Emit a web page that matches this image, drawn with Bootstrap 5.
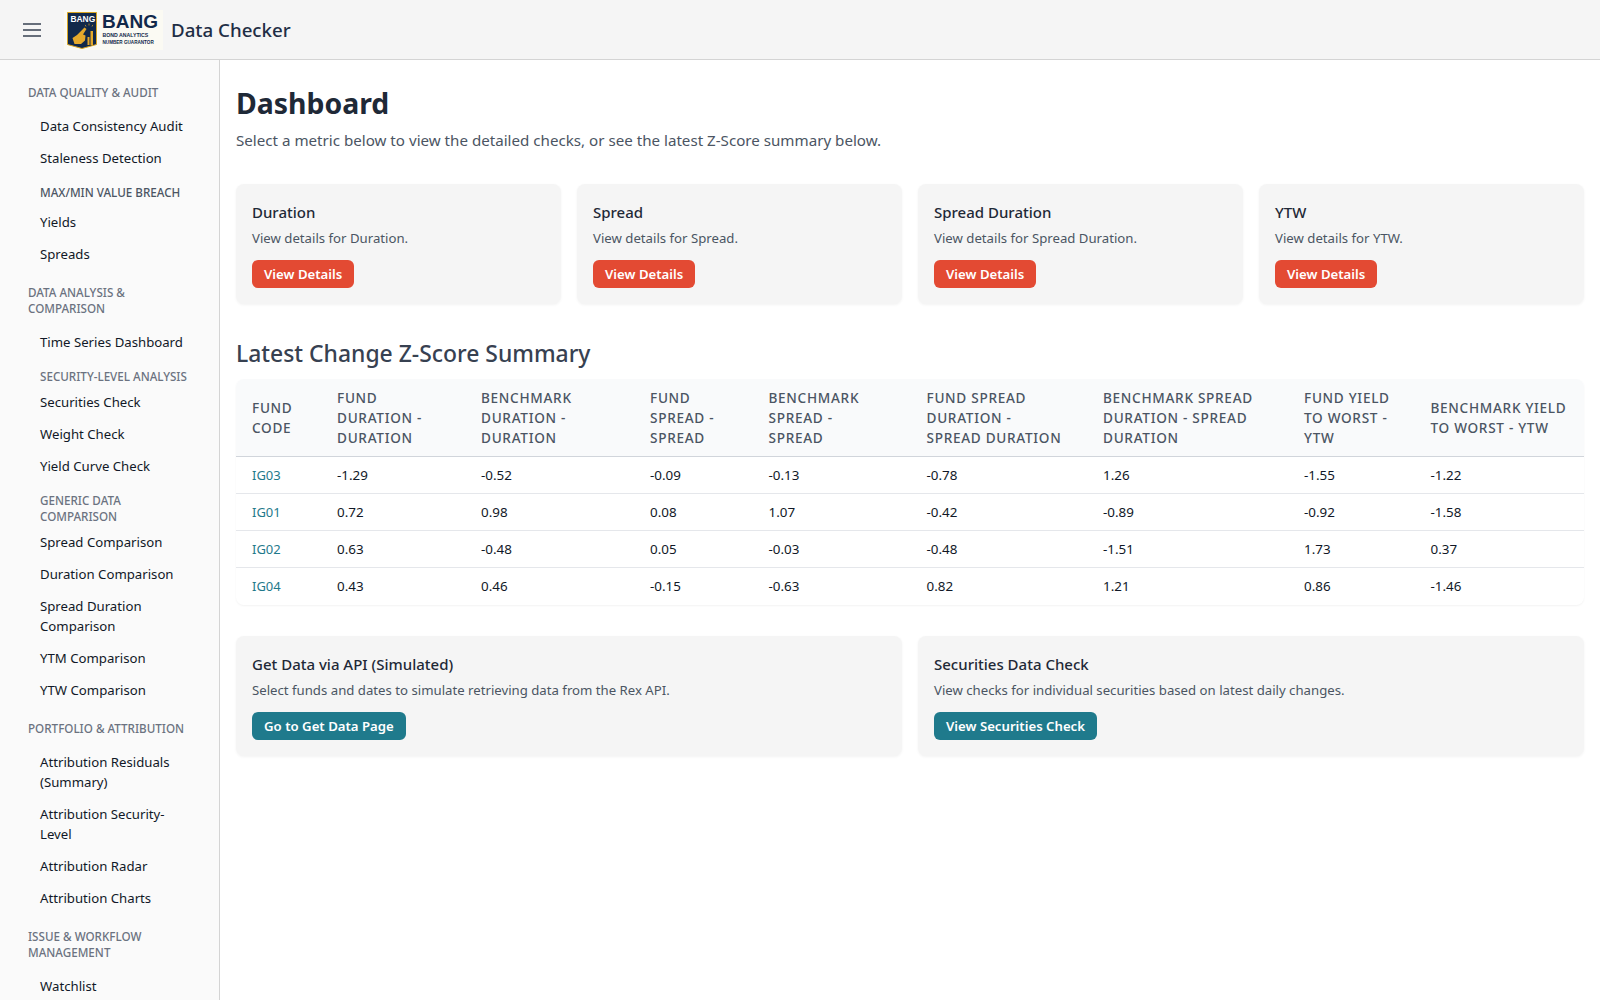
<!DOCTYPE html>
<html lang="en">
<head>
  <meta charset="UTF-8" />
  <title>Data Checker</title>
  <link href="https://cdn.jsdelivr.net/npm/bootstrap@5.3.3/dist/css/bootstrap.min.css" rel="stylesheet">
  <style>
    body {
      font-family: "Noto Sans", "Open Sans", sans-serif;
      font-size: 13.2px;
      color: #1f2937;
      background: #fff;
      height: 1000px;
      overflow: hidden;
    }
    .topbar {
      height: 60px;
      background: #f5f5f5;
      border-bottom: 1px solid #d4d4d4;
      padding-left: 23px;
    }
    .burger { width: 18px; margin-right: 23px; }
    .logo-box { width: 99px; height: 40px; background: #fbfaf3; margin-right: 8px; }
    .app-title { font-size: 18.7px; font-weight: 500; color: #1f2e45; margin-top: 2px; }
    .side {
      width: 220px;
      flex: none;
      height: 940px;
      overflow: hidden;
      background: #fafafa;
      border-right: 1px solid #d4d4d4;
      padding: 25px 16px 0 28px;
    }
    .side-head { font-size: 11.65px; font-weight: 500; line-height: 16px; color: #6b7280; text-transform: uppercase; margin: 14px 0 10px; }
    .side-sub { font-size: 11.65px; font-weight: 500; line-height: 16px; text-transform: uppercase; color: #4b5563; margin: 10px 8px 6px 12px; }
    .side-sub.muted { color: #6b7280; margin-bottom: 2px; }
    .side-link { display: block; color: #111827; text-decoration: none; font-size: 13.2px; line-height: 20px; padding: 5px 12px 7px; }
    .page { padding: 25px 16px 0 16px; min-width: 0; }
    .page-title { font-size: 28.4px; font-weight: 700; color: #1f2937; line-height: 36px; margin: 0 0 7px; }
    .page-lead { font-size: 15.15px; color: #4b5563; line-height: 24px; margin-bottom: 32px; }
    .tile { background: #f5f5f5; border-radius: 8px; padding: 16px; box-shadow: 0 1px 3px rgba(0,0,0,.05); }
    .tile-title { font-size: 15px; font-weight: 500; color: #1f2937; line-height: 25px; margin-bottom: 3px; }
    .tile-text { font-size: 13.2px; color: #4b5563; line-height: 20px; margin-bottom: 12px; }
    .act { display: inline-block; font-size: 13.2px; font-weight: 600; line-height: 20px; color: #fff; border-radius: 6px; padding: 4px 12px; text-decoration: none; }
    .act-red { background: #e34a33; }
    .act-teal { background: #1f7a8c; }
    .section-title { font-size: 22.9px; font-weight: 500; color: #374151; line-height: 32px; margin: 34px 0 9px; }
    .table-wrap { border-radius: 8px; box-shadow: 0 1px 2px rgba(0,0,0,.05); overflow: hidden; margin-bottom: 31px; }
    .score-table { width: 100%; border-collapse: collapse; table-layout: fixed; }
    .score-table th { background: #f9fafb; font-size: 13.6px; font-weight: 500; letter-spacing: .7px; line-height: 20px; color: #4b5563; text-transform: uppercase; padding: 9px 0 8px 16px; border-bottom: 1px solid #d1d5db; vertical-align: middle; }
    .score-table th:nth-child(1) { width: 85px; }
    .score-table th:nth-child(2) { width: 144px; }
    .score-table th:nth-child(3) { width: 169px; }
    .score-table th:nth-child(4) { width: 118.500px; }
    .score-table th:nth-child(5) { width: 158px; }
    .score-table th:nth-child(6) { width: 176.500px; }
    .score-table th:nth-child(7) { width: 201px; }
    .score-table th:nth-child(8) { width: 126.500px; }
    .score-table td { font-size: 13.4px; line-height: 20px; color: #111827; padding: 8px 16px; height: 37px; border-bottom: 1px solid #e5e7eb; }
    .score-table tr:last-child td { border-bottom: 0; }
    .score-table a { color: #1f7a8c; text-decoration: none; font-size: 13px; }
  </style>
</head>
<body>
  <header class="topbar d-flex align-items-center">
    <svg class="burger" viewBox="0 0 18 14" height="14"><path d="M0 1h18M0 7h18M0 13h18" stroke="#374151" stroke-width="1.6" fill="none"/></svg>
    <div class="logo-box d-flex align-items-center">
      <svg width="99" height="40" viewBox="0 0 99 40">
        <path d="M3.5 2.5h29v32l-14.500 4-14.500-4z" fill="#12294a" stroke="#d9a520" stroke-width="1"/>
        <text x="6.500" y="12" font-family="Liberation Sans" font-size="8.400" font-weight="700" fill="#fff">BANG</text>
        <path d="M8.500 28L13 25l7.500-7.500 2 1.500-3.500 5.500 2.500 1-.5 5-4 3.500h-6.500z" fill="#e5a92b"/>
        <path d="M23.500 27h2v8h-2zM26.500 21h2.500v14h-2.500z" fill="#e5a92b"/>
        <path d="M22 16.500l-.8-1.600M25 15.500v-2M28 16.500l.8-1.600" stroke="#e5a92b" stroke-width=".7"/>
        <text x="38" y="18" font-family="Liberation Sans" font-size="19" font-weight="700" fill="#12294a">BANG</text>
        <text x="38.500" y="27" font-family="Liberation Sans" font-size="5.200" font-weight="700" fill="#12294a">BOND ANALYTICS</text>
        <text x="38.500" y="34" font-family="Liberation Sans" font-size="4.600" font-weight="700" fill="#12294a">NUMBER GUARANTOR</text>
      </svg>
    </div>
    <div class="app-title">Data Checker</div>
  </header>
  <div class="d-flex">
    <nav class="side">
      <div class="side-head" style="margin-top:0">Data Quality &amp; Audit</div>
      <a class="side-link" href="#">Data Consistency Audit</a>
      <a class="side-link" href="#">Staleness Detection</a>
      <div class="side-sub">Max/Min Value Breach</div>
      <a class="side-link" href="#">Yields</a>
      <a class="side-link" href="#">Spreads</a>
      <div class="side-head">Data Analysis &amp; Comparison</div>
      <a class="side-link" href="#">Time Series Dashboard</a>
      <div class="side-sub muted">Security-Level Analysis</div>
      <a class="side-link" href="#">Securities Check</a>
      <a class="side-link" href="#">Weight Check</a>
      <a class="side-link" href="#">Yield Curve Check</a>
      <div class="side-sub muted">Generic Data Comparison</div>
      <a class="side-link" href="#">Spread Comparison</a>
      <a class="side-link" href="#">Duration Comparison</a>
      <a class="side-link" href="#">Spread Duration Comparison</a>
      <a class="side-link" href="#">YTM Comparison</a>
      <a class="side-link" href="#">YTW Comparison</a>
      <div class="side-head">Portfolio &amp; Attribution</div>
      <a class="side-link" href="#">Attribution Residuals (Summary)</a>
      <a class="side-link" href="#">Attribution Security-Level</a>
      <a class="side-link" href="#">Attribution Radar</a>
      <a class="side-link" href="#">Attribution Charts</a>
      <div class="side-head">Issue &amp; Workflow Management</div>
      <a class="side-link" href="#">Watchlist</a>
    </nav>
    <main class="page flex-grow-1">
      <h1 class="page-title">Dashboard</h1>
      <p class="page-lead">Select a metric below to view the detailed checks, or see the latest Z-Score summary below.</p>
      <div class="row g-3">
        <div class="col-3"><div class="tile"><div class="tile-title">Duration</div><div class="tile-text">View details for Duration.</div><a class="act act-red" href="#">View Details</a></div></div>
        <div class="col-3"><div class="tile"><div class="tile-title">Spread</div><div class="tile-text">View details for Spread.</div><a class="act act-red" href="#">View Details</a></div></div>
        <div class="col-3"><div class="tile"><div class="tile-title">Spread Duration</div><div class="tile-text">View details for Spread Duration.</div><a class="act act-red" href="#">View Details</a></div></div>
        <div class="col-3"><div class="tile"><div class="tile-title">YTW</div><div class="tile-text">View details for YTW.</div><a class="act act-red" href="#">View Details</a></div></div>
      </div>
      <h2 class="section-title">Latest Change Z-Score Summary</h2>
      <div class="table-wrap">
        <table class="score-table">
          <thead><tr>
            <th>Fund<br>Code</th><th>Fund<br>Duration -<br>Duration</th><th>Benchmark<br>Duration -<br>Duration</th><th>Fund<br>Spread -<br>Spread</th><th>Benchmark<br>Spread -<br>Spread</th><th>Fund Spread<br>Duration -<br>Spread Duration</th><th>Benchmark Spread<br>Duration - Spread<br>Duration</th><th>Fund Yield<br>to Worst -<br>YTW</th><th>Benchmark Yield<br>to Worst - YTW</th>
          </tr></thead>
          <tbody>
            <tr><td><a href="#">IG03</a></td><td>-1.29</td><td>-0.52</td><td>-0.09</td><td>-0.13</td><td>-0.78</td><td>1.26</td><td>-1.55</td><td>-1.22</td></tr>
            <tr><td><a href="#">IG01</a></td><td>0.72</td><td>0.98</td><td>0.08</td><td>1.07</td><td>-0.42</td><td>-0.89</td><td>-0.92</td><td>-1.58</td></tr>
            <tr><td><a href="#">IG02</a></td><td>0.63</td><td>-0.48</td><td>0.05</td><td>-0.03</td><td>-0.48</td><td>-1.51</td><td>1.73</td><td>0.37</td></tr>
            <tr><td><a href="#">IG04</a></td><td>0.43</td><td>0.46</td><td>-0.15</td><td>-0.63</td><td>0.82</td><td>1.21</td><td>0.86</td><td>-1.46</td></tr>
          </tbody>
        </table>
      </div>
      <div class="row g-3">
        <div class="col-6"><div class="tile"><div class="tile-title">Get Data via API (Simulated)</div><div class="tile-text">Select funds and dates to simulate retrieving data from the Rex API.</div><a class="act act-teal" href="#">Go to Get Data Page</a></div></div>
        <div class="col-6"><div class="tile"><div class="tile-title">Securities Data Check</div><div class="tile-text">View checks for individual securities based on latest daily changes.</div><a class="act act-teal" href="#">View Securities Check</a></div></div>
      </div>
    </main>
  </div>
  <script src="https://cdn.jsdelivr.net/npm/bootstrap@5.3.3/dist/js/bootstrap.bundle.min.js"></script>
</body>
</html>
